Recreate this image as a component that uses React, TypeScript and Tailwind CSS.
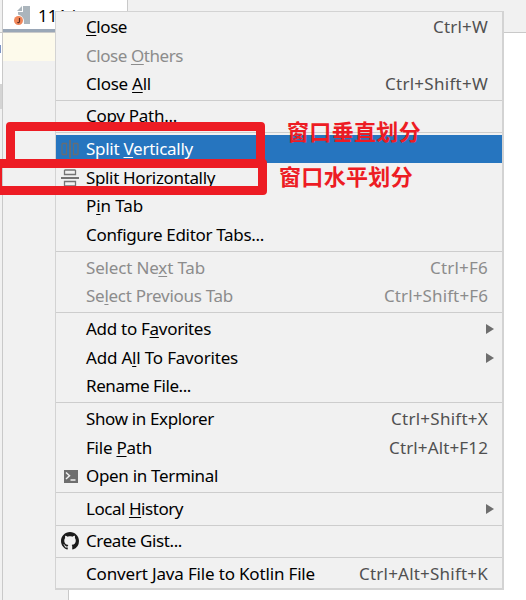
import { useLayoutEffect, useRef, type ReactNode } from "react";

const FONT = "font-['Noto_Sans','Noto_Sans_CJK_SC',sans-serif]";

/* Text whose tracking is adjusted so that it fills a given width. */
function Fit({ width, className = "", children }: { width: number; className?: string; children: ReactNode }) {
  const ref = useRef<HTMLSpanElement>(null);
  useLayoutEffect(() => {
    const el = ref.current;
    if (!el) return;
    el.style.letterSpacing = "0px";
    const natural = el.getBoundingClientRect().width;
    const count = (el.textContent ?? "").length;
    el.style.letterSpacing = `${(width - natural) / count}px`;
  }, [width]);
  return (
    <span ref={ref} className={`inline-block whitespace-pre ${className}`}>
      {children}
    </span>
  );
}

/* The letter after "&" is the mnemonic and is underlined. */
function Label({ text, width }: { text: string; width: number }) {
  const i = text.indexOf("&");
  return (
    <Fit width={width}>
      {i < 0 ? (
        text
      ) : (
        <>
          {text.slice(0, i)}
          <span className="underline decoration-1 underline-offset-2 [text-decoration-skip-ink:none]">{text[i + 1]}</span>
          {text.slice(i + 2)}
        </>
      )}
    </Fit>
  );
}

function SplitIcon({ vertical = false }: { vertical?: boolean }) {
  return (
    <svg width="18" height="18" viewBox="0 0 18 18" className={vertical ? "rotate-90" : ""} fill="none" stroke={vertical ? "#666d75" : "#747474"}>
      <path d="M3.5 1V5.5H14.5V1M3.5 1H14.5M3.5 17V12.5H14.5V17M3.5 17H14.5" strokeWidth="1.3" />
      <path d="M0 9H18" strokeWidth="2" />
    </svg>
  );
}

function TerminalIcon() {
  return (
    <svg width="18" height="18" viewBox="0 0 18 18">
      <rect x="3" y="3" width="14" height="13" fill="#6e6e6e" />
      <path d="M5 5.5L8.5 8.8L5 12M9.5 13H14.5" fill="none" stroke="#f1f1f1" strokeWidth="1.5" />
    </svg>
  );
}

function GithubIcon() {
  return (
    <svg width="18" height="18" viewBox="0 0 16 16" fill="#1b1b1b">
      <path d="M8 0C3.58 0 0 3.58 0 8c0 3.54 2.29 6.53 5.47 7.59.4.07.55-.17.55-.38 0-.19-.01-.82-.01-1.49-2.01.37-2.53-.49-2.69-.94-.09-.23-.48-.94-.82-1.13-.28-.15-.68-.52-.01-.53.63-.01 1.08.58 1.23.82.72 1.21 1.87.87 2.33.66.07-.52.28-.87.51-1.07-1.78-.2-3.64-.89-3.64-3.95 0-.87.31-1.59.82-2.15-.08-.2-.36-1.02.08-2.12 0 0 .67-.21 2.2.82.64-.18 1.32-.27 2-.27s1.36.09 2 .27c1.53-1.04 2.2-.82 2.2-.82.44 1.1.16 1.92.08 2.12.51.56.82 1.27.82 2.15 0 3.07-1.87 3.75-3.65 3.95.29.25.54.73.54 1.48 0 1.07-.01 1.93-.01 2.2 0 .21.15.46.55.38A8.01 8.01 0 0 0 16 8c0-4.42-3.58-8-8-8z" />
    </svg>
  );
}

type Item = {
  label: string;
  w: number;
  h: string;
  keys?: string;
  kw?: number;
  disabled?: boolean;
  active?: boolean;
  submenu?: boolean;
  icon?: ReactNode;
};

const S = "h-7";
const L = "h-[29px]";

const groups: Item[][] = [
  [
    { label: "&Close", w: 41, h: L, keys: "Ctrl+W", kw: 55 },
    { label: "Close &Others", w: 97, h: L, disabled: true },
    { label: "Close &All", w: 65, h: S, keys: "Ctrl+Shift+W", kw: 103 },
  ],
  [{ label: "Copy Path...", w: 91, h: S }],
  [
    { label: "Split &Vertically", w: 107, h: S, active: true, icon: <SplitIcon vertical /> },
    { label: "Split &Horizontally", w: 129, h: L, icon: <SplitIcon /> },
    { label: "P&in Tab", w: 57, h: S },
    { label: "Configure Editor Tabs...", w: 178, h: L },
  ],
  [
    { label: "Select Ne&xt Tab", w: 119, h: L, keys: "Ctrl+F6", kw: 58, disabled: true },
    { label: "Se&lect Previous Tab", w: 147, h: S, keys: "Ctrl+Shift+F6", kw: 104, disabled: true },
  ],
  [
    { label: "Add to F&avorites", w: 125, h: L, submenu: true },
    { label: "Add A&ll To Favorites", w: 152, h: L, submenu: true },
    { label: "Rename File...", w: 105, h: S },
  ],
  [
    { label: "Show in Explorer", w: 128, h: L, keys: "Ctrl+Shift+X", kw: 97 },
    { label: "File &Path", w: 66, h: L, keys: "Ctrl+Alt+F12", kw: 99 },
    { label: "Open in Terminal", w: 132, h: S, icon: <TerminalIcon /> },
  ],
  [{ label: "Local &History", w: 97, h: L, submenu: true }],
  [{ label: "Create Gist...", w: 96, h: S, icon: <GithubIcon /> }],
  [{ label: "Convert Java File to Kotlin File", w: 229, h: L, keys: "Ctrl+Alt+Shift+K", kw: 129 }],
];

function Row({ item }: { item: Item }) {
  const tone = item.active ? "bg-[#2675bf] text-white" : item.disabled ? "text-[#8c8c8c]" : "text-black";
  return (
    <div className={`flex items-center ${item.h} ${tone}`}>
      <span className="flex w-[30px] shrink-0 pl-[5px]">{item.icon}</span>
      <Label text={item.label} width={item.w} />
      <span className={`ml-auto flex ${item.submenu ? "pr-2" : "pr-[14px]"} ${item.disabled ? "" : "text-[#505050]"}`}>
        {item.keys && <Fit width={item.kw ?? 0}>{item.keys}</Fit>}
        {item.submenu && (
          <svg width="8" height="10" viewBox="0 0 8 10">
            <path d="M0 0L8 5L0 10Z" fill="#6e6e6e" />
          </svg>
        )}
      </span>
    </div>
  );
}

function JavaFileIcon() {
  return (
    <svg width="18" height="20" viewBox="0 0 18 20">
      <path d="M9 0H16V18H10Q11 10 4 8.5V6H9Z" fill="#abb5bc" />
      <path d="M8 0V5H3Z" fill="#abb5bc" />
      <circle cx="4.5" cy="14.5" r="4.5" fill="#f0875a" />
      <path d="M5.5 12V15.5Q5.3 17 3.3 16.5" fill="none" stroke="#5b2b20" strokeWidth="1.2" />
    </svg>
  );
}

export default function App() {
  return (
    <div className={`relative flex h-[600px] w-[526px] overflow-hidden bg-white text-[17px] leading-5 ${FONT}`}>
      <div className="flex w-[3px] shrink-0 flex-col border-r border-[#c9c9c9] bg-[#f1f1f1]">
        <div className="h-[33px] border-b border-[#c9c9c9]" />
        <div className="h-[51px] bg-white pt-3">
          <div className="h-2 w-px bg-[#7c93c4]" />
        </div>
        <div className="h-[25px] bg-[#d4d4d4]" />
      </div>
      <div className="flex grow flex-col">
        <div className="flex h-[33px] border-b border-[#c9c9c9] bg-[#f1f1f1]">
          <div className="flex h-[32px] w-[125px] items-start border-r border-b-[3px] border-r-[#c9c9c9] border-b-[#9aa7b7] bg-white pt-[6px] pl-[11px]">
            <JavaFileIcon />
            <span className="ml-[6px]">111.java</span>
          </div>
        </div>
        <div className="flex grow">
          <div className="w-[66px] border-r border-[#c9c9c9] bg-[#f1f1f1]">
            <div className="h-7 bg-[#fdfaeb]" />
          </div>
        </div>
      </div>

      <div className="absolute top-[11px] left-[55px] w-[449px] border-t border-r-2 border-b-2 border-l border-[#d3d3d3] bg-[#f1f1f1]">
        {groups.map((group, g) => (
          <div key={g}>
            {g > 0 && (
              <div className={`pt-[2px] ${g === 2 ? "h-[5px]" : "h-1"}`}>
                <div className="h-px bg-[#cdcdcd]" />
              </div>
            )}
            {group.map((item) => (
              <Row key={item.label} item={item} />
            ))}
          </div>
        ))}
      </div>

      <div className="absolute top-[122px] left-[6px] h-[46px] w-[259px] rounded-[4px] border-[9px] border-[#ed1c24]" />
      <div className="absolute top-[159px] -left-[7px] h-[36px] w-[274px] rounded-[4px] border-[9px] border-[#ed1c24]" />
      <div className="absolute top-[116px] left-[287px] font-['Noto_Sans_CJK_SC',sans-serif] text-[22px] leading-[28px] font-bold text-[#ed1c24]">
        <Fit width={134}>窗口垂直划分</Fit>
      </div>
      <div className="absolute top-[161px] left-[279px] font-['Noto_Sans_CJK_SC',sans-serif] text-[22px] leading-[28px] font-bold text-[#ed1c24]">
        <Fit width={134}>窗口水平划分</Fit>
      </div>
    </div>
  );
}
